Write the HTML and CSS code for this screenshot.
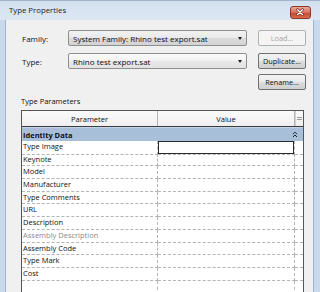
FILE: index.html
```html
<!DOCTYPE html>
<html lang="en">
<head>
  <meta charset="UTF-8">
  <title>Type Properties</title>
  <link rel="stylesheet" href="styles.css">
</head>
<body>
  <div class="window">
    <div class="titlebar">
      <span class="title">Type Properties</span>
      <span class="close">
        <svg width="21" height="13" viewBox="0 0 21 13">
          <path d="M8 3.5 L13 8.5 M13 3.5 L8 8.5" stroke="#5a1a10" stroke-width="2.8" stroke-linecap="round"/>
          <path d="M8 3.5 L13 8.5 M13 3.5 L8 8.5" stroke="#fff" stroke-width="1.5" stroke-linecap="round"/>
        </svg>
      </span>
    </div>

    <div class="client">
      <div class="top">
        <label class="lbl">Family:</label>
        <div class="combo family">System Family: Rhino test export.sat<span class="arrow"></span></div>
        <button class="btn" disabled>Load...</button>

        <label class="lbl">Type:</label>
        <div class="combo">Rhino test export.sat<span class="arrow"></span></div>
        <button class="btn">Duplicate...</button>

        <span></span>
        <span></span>
        <button class="btn rename">Rename...</button>
      </div>

      <div class="section-label">Type Parameters</div>

      <div class="grid">
        <div class="head">
          <div class="hcell">Parameter</div>
          <div class="hcell">Value</div>
          <div class="hcell hicon">
            <svg width="5" height="5" viewBox="0 0 5 5"><path d="M0 1.5H5M0 3.5H5" stroke="#9a9a9a" stroke-width="1"/></svg>
          </div>
        </div>
        <div class="group">
          <span>Identity Data</span>
          <svg class="collapse" width="6" height="7" viewBox="0 0 6 7"><path d="M1 3.2L3 1.2L5 3.2M1 6L3 4L5 6" fill="none" stroke="#1e1e1e" stroke-width="1"/></svg>
        </div>
        <div class="row"><div class="cell">Type Image</div><div class="cell"><div class="edit"></div></div><div class="cell"></div></div>
        <div class="row"><div class="cell">Keynote</div><div class="cell"></div><div class="cell"></div></div>
        <div class="row"><div class="cell">Model</div><div class="cell"></div><div class="cell"></div></div>
        <div class="row"><div class="cell">Manufacturer</div><div class="cell"></div><div class="cell"></div></div>
        <div class="row"><div class="cell">Type Comments</div><div class="cell"></div><div class="cell"></div></div>
        <div class="row"><div class="cell">URL</div><div class="cell"></div><div class="cell"></div></div>
        <div class="row"><div class="cell">Description</div><div class="cell"></div><div class="cell"></div></div>
        <div class="row"><div class="cell muted">Assembly Description</div><div class="cell"></div><div class="cell"></div></div>
        <div class="row"><div class="cell">Assembly Code</div><div class="cell"></div><div class="cell"></div></div>
        <div class="row"><div class="cell">Type Mark</div><div class="cell"></div><div class="cell"></div></div>
        <div class="row"><div class="cell">Cost</div><div class="cell"></div><div class="cell"></div></div>
        <div class="filler"><div></div><div></div><div></div></div>
      </div>
    </div>
  </div>
</body>
</html>
```

FILE: styles.css
```css
body {
  margin: 0;
  font-family: "Open Sans", "Liberation Sans", sans-serif;
  font-size: 7.5px;
  color: #111111;
}
.window {
  width: 320px;
  height: 292px;
  overflow: hidden;
  display: flex;
  flex-direction: column;
  background: linear-gradient(90deg, #c9daee, #bfd3ea 50%, #c9daee);
}
.titlebar {
  flex-shrink: 0;
  height: 20px;
  box-sizing: border-box;
  display: flex;
  align-items: center;
  justify-content: space-between;
  padding: 0 9px 0 9px;
  background: linear-gradient(#d2dfee, #dce7f3);
  border-top: 1px solid #9fb3cb;
}
.title {
  font-size: 7.8px;
  line-height: 11px;
  margin-top: -1px;
  color: #1e1e1e;
}
.close {
  display: flex;
  width: 21px;
  height: 13px;
  margin-top: 3px;
  box-sizing: border-box;
  border: 1px solid #8c3a2a;
  border-radius: 3px;
  background: linear-gradient(#eba99b, #d9705c 50%, #c44a32 55%, #d66a4f);
  overflow: hidden;
}
.close svg {
  margin: -1px 0 0 -1px;
}
.client {
  flex: 1;
  min-height: 0;
  overflow: hidden;
  margin: 0 6px 0 5px;
  border-left: 1px solid #9fb5cf;
  border-right: 1px solid #9fb5cf;
  background: #f0f0f0;
}
.top {
  display: grid;
  grid-template-columns: 46px 179px 59px;
  grid-template-rows: 16px 16px 16px;
  row-gap: 7px;
  padding: 10px 0 0 16px;
  font-size: 8px;
}
.lbl {
  display: flex;
  align-items: center;
}
.combo {
  position: relative;
  display: flex;
  align-items: center;
  padding-left: 4px;
  border: 1px solid #8e8f8f;
  border-radius: 2px;
  white-space: nowrap;
  background: linear-gradient(#fbfbfb, #f1f1f1 50%, #e8e8e8 51%, #e2e2e2);
}
.family {
  background: linear-gradient(#f2f2f2, #e9e9e9 50%, #dbdbdb 51%, #d3d3d3);
}
.arrow {
  position: absolute;
  right: 4px;
  top: 6px;
  border-left: 2.5px solid transparent;
  border-right: 2.5px solid transparent;
  border-top: 3px solid #1e1e1e;
}
.btn {
  margin: 0 0 0 11px;
  padding: 0;
  font-family: inherit;
  font-size: 7.3px;
  white-space: nowrap;
  color: #111111;
  border: 1px solid #707070;
  border-radius: 2px;
  background: linear-gradient(#f2f2f2, #ebebeb 50%, #dddddd 51%, #cfcfcf);
}
.btn:disabled {
  color: #a3a3a3;
  border-color: #adb2b5;
  background: #f4f4f4;
}
.rename {
  margin-top: -2px;
  margin-bottom: 2px;
}
.section-label {
  margin: 4px 0 0 15px;
  line-height: 10px;
  height: 10px;
}
.grid {
  width: 283px;
  height: 200px;
  box-sizing: border-box;
  margin: 4px 0 0 15px;
  border: 1px solid #555555;
  border-bottom: none;
  background: #ffffff;
}
.head {
  display: grid;
  grid-template-columns: 136px 137px 8px;
  height: 16px;
  box-sizing: border-box;
  border-bottom: 1px solid #3c3c3c;
  background: linear-gradient(#fbfbfb, #efefef);
}
.hcell {
  display: flex;
  align-items: center;
  justify-content: center;
  border-right: 1px solid #b5b5b5;
}
.hcell:last-child {
  border-right: none;
}
.hicon {
  border-left: 1px solid #d0d0d0;
}
.group {
  height: 14px;
  display: flex;
  align-items: center;
  justify-content: space-between;
  padding: 0 5px 0 1px;
  font-weight: bold;
  background: #a8bfda;
  border-top: 1px solid #c2d3e7;
  box-sizing: border-box;
}
.row {
  display: grid;
  grid-template-columns: 136px 137px 8px;
  height: 12.7px;
}
.cell {
  box-sizing: border-box;
  padding-left: 1px;
  line-height: 11px;
  border-bottom: 1px dashed #b4b4b4;
  border-right: 1px dashed #b4b4b4;
  white-space: nowrap;
}
.cell:last-child {
  border-right: none;
}
.muted {
  color: #8a8a8a;
}
.edit {
  height: 13px;
  margin-left: -1px;
  box-sizing: border-box;
  border: 1px solid #2a2a2a;
  background: #ffffff;
}
.filler {
  display: grid;
  grid-template-columns: 136px 137px 8px;
  height: 20px;
}
.filler div {
  border-right: 1px dashed #b4b4b4;
}
.filler div:last-child {
  border-right: none;
}
```
